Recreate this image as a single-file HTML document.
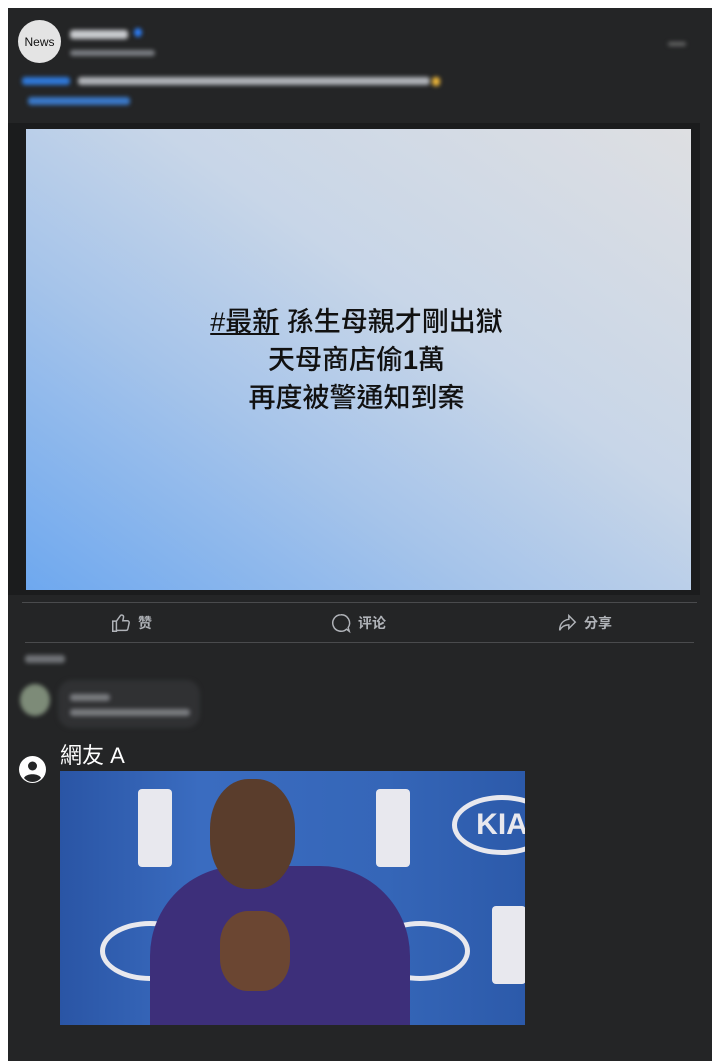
<!DOCTYPE html>
<html><head><meta charset="utf-8"><style>
body{margin:0;width:717px;height:1061px;background:#fff;position:relative;overflow:hidden;font-family:"Liberation Sans","Noto Sans CJK TC",sans-serif}
.card{position:absolute;left:8px;top:8px;width:704px;height:1053px;background:#242526}
.blur{position:absolute;filter:blur(2px);border-radius:3px}
.img{position:absolute;left:26px;top:129px;width:665px;height:461px;background:linear-gradient(35deg,#6ea8ef 0%,#a6c4ea 35%,#c8d6e8 60%,#dedfe2 100%);display:flex;align-items:center;justify-content:center;text-align:center;color:#111;font-size:27px;font-weight:500;line-height:38px}
.hr{position:absolute;height:1px;background:#4a4b4d}
.act{position:absolute;top:612px;color:#b0b3b8;font-size:14px;font-weight:bold;display:flex;align-items:center;gap:6px}
</style></head><body>
<div class="card"></div>
<div style="position:absolute;left:18px;top:20px;width:43px;height:43px;border-radius:50%;background:#e4e4e4;color:#111;font-size:12px;display:flex;align-items:center;justify-content:center">News</div>
<div class="blur" style="left:70px;top:30px;width:58px;height:9px;background:#c9cbcf"></div>
<div class="blur" style="left:134px;top:28px;width:8px;height:9px;background:#2d7ef7;border-radius:50%"></div>
<div class="blur" style="left:70px;top:50px;width:85px;height:6px;background:#7c7f84"></div>
<div class="blur" style="left:668px;top:42px;width:18px;height:4px;background:#666"></div>
<div class="blur" style="left:22px;top:77px;width:48px;height:8px;background:#2f78d8"></div>
<div class="blur" style="left:78px;top:77px;width:352px;height:8px;background:#b0b3b8"></div>
<div class="blur" style="left:432px;top:77px;width:8px;height:9px;background:#e8b33a"></div>
<div class="blur" style="left:28px;top:97px;width:102px;height:8px;background:#3a78c7"></div>
<div style="position:absolute;left:8px;top:123px;width:692px;height:472px;background:#1b1c1d"></div>
<div class="img"><div style="margin-left:-4px"><span style="text-decoration:underline">#最新</span> 孫生母親才剛出獄<br>天母商店偷<b>1</b>萬<br>再度被警通知到案</div></div>
<div class="hr" style="left:22px;top:602px;width:675px"></div>
<div class="hr" style="left:25px;top:642px;width:669px"></div>
<div class="act" style="left:110px"><svg width="22" height="22" viewBox="0 0 24 24" fill="none" stroke="#b0b3b8" stroke-width="1.6"><path d="M3 10h4v11H3zM7 20h10.5a2 2 0 0 0 2-1.6l1.4-6.5A2 2 0 0 0 19 9.5h-5l.8-4a2 2 0 0 0-3.6-1.4L7 10"/></svg>赞</div>
<div class="act" style="left:330px"><svg width="22" height="22" viewBox="0 0 24 24" fill="none" stroke="#b0b3b8" stroke-width="1.6"><path d="M12 3a9 9 0 1 0 6 15.7L21 21l-1.2-4A9 9 0 0 0 12 3z"/></svg>评论</div>
<div class="act" style="left:556px"><svg width="22" height="22" viewBox="0 0 24 24" fill="none" stroke="#b0b3b8" stroke-width="1.6"><path d="M14 4l7 7-7 7v-4c-5 0-8 2-10 6 0-6 3-11 10-12z"/></svg>分享</div>
<div class="blur" style="left:25px;top:655px;width:40px;height:8px;background:#6f7276"></div>
<div class="blur" style="left:20px;top:684px;width:30px;height:32px;border-radius:50%;background:#7d8b78"></div>
<div class="blur" style="left:58px;top:680px;width:142px;height:48px;background:#303133;border-radius:14px"></div>
<div class="blur" style="left:70px;top:694px;width:40px;height:7px;background:#7a7c80"></div>
<div class="blur" style="left:70px;top:709px;width:120px;height:7px;background:#7a7c80"></div>
<div style="position:absolute;left:60px;top:738px;color:#fff;font-size:22px">網友 A</div>
<svg style="position:absolute;left:19px;top:756px" width="27" height="27" viewBox="0 0 27 27"><circle cx="13.5" cy="13.5" r="13.5" fill="#fff"/><circle cx="13.5" cy="10" r="4.5" fill="#242526"/><path d="M5 22c2-5 15-5 17 0a11 11 0 0 1-17 0z" fill="#242526"/></svg>
<div style="position:absolute;left:60px;top:771px;width:465px;height:254px;overflow:hidden;background:linear-gradient(90deg,#2a55a5,#3a6cc0 30%,#3566b8 70%,#2c5aaa)">
<div style="position:absolute;left:78px;top:18px;width:34px;height:78px;background:#e8e8ee;border-radius:4px"></div>
<div style="position:absolute;left:316px;top:18px;width:34px;height:78px;background:#e8e8ee;border-radius:4px"></div>
<div style="position:absolute;left:432px;top:135px;width:34px;height:78px;background:#e8e8ee;border-radius:4px"></div>
<div style="position:absolute;left:392px;top:24px;width:90px;height:50px;border:5px solid #e8e8ee;border-radius:50%;color:#e8e8ee;font-weight:bold;font-size:30px;text-align:center;line-height:50px">KIA</div>
<div style="position:absolute;left:40px;top:150px;width:90px;height:50px;border:5px solid #e8e8ee;border-radius:50%"></div>
<div style="position:absolute;left:310px;top:150px;width:90px;height:50px;border:5px solid #e8e8ee;border-radius:50%"></div>
<div style="position:absolute;left:90px;top:95px;width:260px;height:200px;background:#3d2f7a;border-radius:90px 90px 0 0"></div>
<div style="position:absolute;left:150px;top:8px;width:85px;height:110px;background:#5a3d2c;border-radius:45%"></div>
<div style="position:absolute;left:160px;top:140px;width:70px;height:80px;background:#6b4632;border-radius:40%"></div>
</div>
</body></html>
